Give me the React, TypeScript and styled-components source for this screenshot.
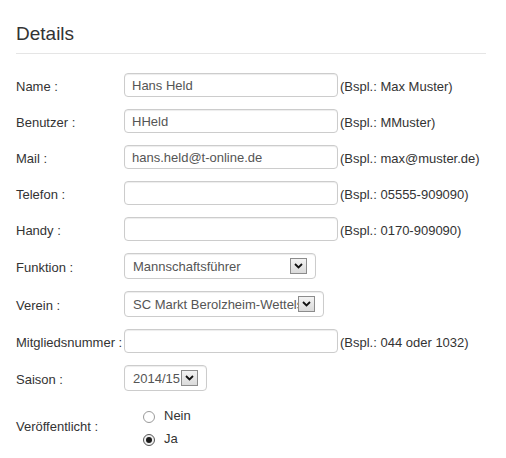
import styled, { createGlobalStyle } from 'styled-components';

const GlobalStyle = createGlobalStyle`
body {
  margin: 0;
  background: #fff;
  font-family: "Liberation Sans", Arial, sans-serif;
  font-size: 13px;
  color: #333;
}
`;

const Page = styled.div`
width: 470px;
padding: 0 20px 0 16px;
`;
const Heading = styled.h2`
margin: 23px 0 0;
font-size: 19px;
font-weight: normal;
line-height: 22px;
color: #333;
`;
const Rule = styled.div`
margin-top: 8px;
height: 1px;
background-color: #e5e5e5;
`;
const Form = styled.form`
margin-top: 19px;
`;
const Row = styled.div<{ $center?: boolean }>`
display: flex;
align-items: ${p => (p.$center ? 'center' : 'flex-end')};
margin-bottom: 12px;
`;
const Label = styled.label<{ $lift: number }>`
width: 108px;
flex-shrink: 0;
line-height: 15px;
white-space: nowrap;
margin-bottom: ${p => p.$lift}px;
`;
const Hint = styled.span<{ $lift: number }>`
margin-left: 2px;
line-height: 15px;
white-space: nowrap;
margin-bottom: ${p => p.$lift}px;
`;
const TextInput = styled.input`
width: 214px;
height: 24px;
box-sizing: border-box;
padding: 0 7px;
border: 1px solid #ccc;
border-radius: 4px;
box-shadow: inset 0 1px 1px rgba(0, 0, 0, 0.075);
font-family: "Liberation Sans", Arial, sans-serif;
font-size: 13px;
color: #555;
outline: none;
`;
const SelectBox = styled.div<{ $width: number }>`
display: flex;
align-items: center;
width: ${p => p.$width}px;
height: 26px;
box-sizing: border-box;
padding: 0 8px;
border: 1px solid #ccc;
border-radius: 4px;
box-shadow: inset 0 1px 1px rgba(0, 0, 0, 0.075);
`;
const NativeSelect = styled.select`
flex: 1;
min-width: 0;
appearance: none;
border: none;
background: transparent;
padding: 0;
margin: 0;
font-family: "Liberation Sans", Arial, sans-serif;
font-size: 13px;
color: #555;
outline: none;
`;
const ArrowBox = styled.span`
display: flex;
align-items: center;
justify-content: center;
flex-shrink: 0;
width: 17px;
height: 16px;
box-sizing: border-box;
border: 1px solid #8c8c8c;
background: linear-gradient(#f3f3f3, #dadada);
`;
const RadioGroup = styled.div`
display: flex;
flex-direction: column;
padding-left: 19px;
margin-top: 1px;
`;
const RadioOption = styled.label`
display: flex;
align-items: center;
gap: 9px;
height: 23px;
line-height: 15px;
`;
const RadioCircle = styled.span<{ $checked?: boolean }>`
display: flex;
align-items: center;
justify-content: center;
width: 12px;
height: 12px;
box-sizing: border-box;
margin-top: 2px;
border-radius: 50%;
border: 1px solid ${p => (p.$checked ? '#555' : '#9a9a9a')};
background: ${p => (p.$checked ? '#f0f0f0' : '#fff')};
&::after {
  content: '';
  display: ${p => (p.$checked ? 'block' : 'none')};
  width: 6px;
  height: 6px;
  border-radius: 50%;
  background: #1a1a1a;
}
`;

const Chevron = () => (
  <svg width="9" height="6" viewBox="0 0 9 6">
    <path d="M1 1l3.5 3.5L8 1" fill="none" stroke="#111" strokeWidth="1.8" />
  </svg>
);

const textRows = [
  { label: 'Name :', value: 'Hans Held', hint: '(Bspl.: Max Muster)' },
  { label: 'Benutzer :', value: 'HHeld', hint: '(Bspl.: MMuster)' },
  { label: 'Mail :', value: 'hans.held@t-online.de', hint: '(Bspl.: max@muster.de)' },
  { label: 'Telefon :', value: '', hint: '(Bspl.: 05555-909090)' },
  { label: 'Handy :', value: '', hint: '(Bspl.: 0170-909090)' },
];

const Select = ({ width, value }: { width: number; value: string }) => (
  <SelectBox $width={width}>
    <NativeSelect defaultValue={value}>
      <option>{value}</option>
    </NativeSelect>
    <ArrowBox>
      <Chevron />
    </ArrowBox>
  </SelectBox>
);

export default function App() {
  return (
    <Page>
      <GlobalStyle />
      <Heading>Details</Heading>
      <Rule />
      <Form>
        {textRows.map(r => (
          <Row key={r.label}>
            <Label $lift={3}>{r.label}</Label>
            <TextInput defaultValue={r.value} />
            <Hint $lift={3}>{r.hint}</Hint>
          </Row>
        ))}
        <Row>
          <Label $lift={4}>Funktion :</Label>
          <Select width={192} value="Mannschaftsführer" />
        </Row>
        <Row>
          <Label $lift={4}>Verein :</Label>
          <Select width={200} value="SC Markt Berolzheim-Wettelsheim" />
        </Row>
        <Row>
          <Label $lift={3}>Mitgliedsnummer :</Label>
          <TextInput />
          <Hint $lift={3}>(Bspl.: 044 oder 1032)</Hint>
        </Row>
        <Row>
          <Label $lift={4}>Saison :</Label>
          <Select width={83} value="2014/15" />
        </Row>
        <Row $center>
          <Label $lift={0}>Veröffentlicht :</Label>
          <RadioGroup>
            <RadioOption>
              <RadioCircle />
              Nein
            </RadioOption>
            <RadioOption>
              <RadioCircle $checked />
              Ja
            </RadioOption>
          </RadioGroup>
        </Row>
      </Form>
    </Page>
  );
}
